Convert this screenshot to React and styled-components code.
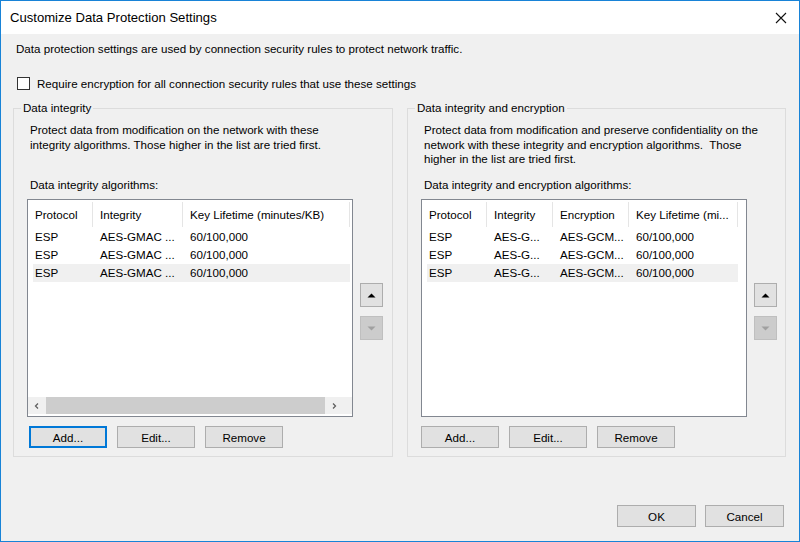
import React from 'react'
import styled, { createGlobalStyle } from 'styled-components'

const GlobalStyle = createGlobalStyle`
  html, body { margin:0; padding:0; background:#fff; }
  body {
    font-family: "Liberation Sans", Arial, sans-serif;
    font-size:11.6px;
    color:#000;
  }
`

const Window = styled.div`
  width:800px;
  height:542px;
  box-sizing:border-box;
  border:1px solid #1883d7;
  background:#f0f0f0;
  display:flex;
  flex-direction:column;
`
const TitleBar = styled.div`
  height:33px;
  flex-shrink:0;
  background:#fff;
  display:flex;
  align-items:center;
  justify-content:space-between;
  padding-left:9px;
`
const Title = styled.div`
  font-size:13.1px;
`
const CloseBtn = styled.div`
  width:36px;
  height:33px;
  display:flex;
  align-items:center;
  justify-content:center;
`
const Body = styled.div`
  flex:1;
  padding:7px 13px 0 12px;
  display:flex;
  flex-direction:column;
`
const Intro = styled.div`
  margin-left:3px;
  line-height:15px;
`
const CheckRow = styled.label`
  margin:20px 0 0 4px;
  display:flex;
  align-items:center;
  gap:7px;
  line-height:15px;
`
const CheckBox = styled.span`
  width:13px;
  height:13px;
  box-sizing:border-box;
  border:1px solid #333;
  background:#fff;
`
const Groups = styled.div`
  display:grid;
  grid-template-columns:380px 379px;
  column-gap:14px;
  margin-top:9px;
`
const GroupBox = styled.fieldset`
  margin:0;
  padding:0 0 8px 0;
  min-width:0;
  border:1px solid #dcdcdc;
`
const Legend = styled.legend`
  margin-left:7px;
  padding:0 2px;
  line-height:16px;
`
const Description = styled.div`
  margin:7px 0 0 16px;
  height:44px;
  line-height:14.5px;
  white-space:pre;
`
const ListLabel = styled.div`
  margin:10px 0 0 16px;
  line-height:15px;
`
const ListArea = styled.div`
  display:flex;
  align-items:flex-start;
  gap:7px;
  margin:7px 0 0 13px;
`
const ListView = styled.div`
  width:326px;
  height:218px;
  box-sizing:border-box;
  border:1px solid #828790;
  background:#fff;
  display:flex;
  flex-direction:column;
  overflow:hidden;
`
const HeaderRow = styled.div`
  height:28px;
  flex-shrink:0;
  display:flex;
  align-items:stretch;
  padding:2px 0 1px 5px;
  box-sizing:border-box;
`
const HeaderCell = styled.div`
  width:${p => p.$w}px;
  flex-shrink:0;
  box-sizing:border-box;
  padding-left:7px;
  border-right:1px solid #e5e5e5;
  display:flex;
  align-items:center;
  white-space:nowrap;
  overflow:hidden;
  &:first-child { padding-left:2px; }
`
const Row = styled.div`
  height:18px;
  flex-shrink:0;
  display:flex;
  margin-left:5px;
  width:${p => p.$w}px;
  background:${p => (p.$hot ? '#f0f0f0' : 'transparent')};
`
const Cell = styled.div`
  width:${p => p.$w}px;
  flex-shrink:0;
  box-sizing:border-box;
  padding-left:7px;
  line-height:18px;
  white-space:nowrap;
  overflow:hidden;
  &:first-child { padding-left:2px; }
`
const ScrollBar = styled.div`
  margin-top:auto;
  margin-bottom:2px;
  height:17px;
  flex-shrink:0;
  display:flex;
  background:#f0f0f0;
`
const ScrollArrow = styled.div`
  width:18px;
  display:flex;
  align-items:center;
  justify-content:center;
`
const Thumb = styled.div`
  width:279px;
  background:#cdcdcd;
`
const ArrowCol = styled.div`
  display:flex;
  flex-direction:column;
  gap:9px;
  margin-top:84px;
`
const MoveBtn = styled.div`
  width:23px;
  height:24px;
  box-sizing:border-box;
  border:1px solid ${p => (p.$disabled ? '#bfbfbf' : '#adadad')};
  background:${p => (p.$disabled ? '#cccccc' : '#e1e1e1')};
  display:flex;
  align-items:center;
  justify-content:center;
`
const ButtonRow = styled.div`
  display:flex;
  gap:10px;
  margin:9px 0 0 ${p => p.$indent}px;
`
const Button = styled.button`
  width:${p => p.$w || 78}px;
  height:22px;
  box-sizing:border-box;
  padding:0;
  border:1px solid ${p => (p.$focused ? '#0078d7' : '#adadad')};
  box-shadow:${p => (p.$focused ? 'inset 0 0 0 1px #0078d7' : 'none')};
  background:#e1e1e1;
  font-family:inherit;
  font-size:11.6px;
  color:#000;
`
const Footer = styled.div`
  margin-top:48px;
  padding-right:2px;
  display:flex;
  justify-content:flex-end;
  gap:9px;
`

const Chevron = ({ dir }) => (
  <svg width="8" height="8" viewBox="0 0 8 8">
    <path
      d={dir === 'left' ? 'M5 1.5 L2.5 4 L5 6.5' : 'M3 1.5 L5.5 4 L3 6.5'}
      fill="none"
      stroke="#606060"
      strokeWidth="1.3"
    />
  </svg>
)

const Triangle = ({ up, color }) => (
  <svg width="9" height="5" viewBox="0 0 9 5">
    <path d={up ? 'M0.5 4.5 L4.5 0.5 L8.5 4.5 Z' : 'M0.5 0.5 L8.5 0.5 L4.5 4.5 Z'} fill={color} />
  </svg>
)

const leftCols = [
  { label: 'Protocol', w: 60 },
  { label: 'Integrity', w: 90 },
  { label: 'Key Lifetime (minutes/KB)', w: 167 },
]
const leftRows = [
  ['ESP', 'AES-GMAC ...', '60/100,000'],
  ['ESP', 'AES-GMAC ...', '60/100,000'],
  ['ESP', 'AES-GMAC ...', '60/100,000'],
]
const rightCols = [
  { label: 'Protocol', w: 60 },
  { label: 'Integrity', w: 66 },
  { label: 'Encryption', w: 76 },
  { label: 'Key Lifetime (mi...', w: 109 },
]
const rightRows = [
  ['ESP', 'AES-G...', 'AES-GCM...', '60/100,000'],
  ['ESP', 'AES-G...', 'AES-GCM...', '60/100,000'],
  ['ESP', 'AES-G...', 'AES-GCM...', '60/100,000'],
]

const AlgorithmList = ({ cols, rows, scroll }) => {
  const width = cols.reduce((s, c) => s + c.w, 0)
  return (
    <ListView>
      <HeaderRow>
        {cols.map(c => (
          <HeaderCell key={c.label} $w={c.w}>{c.label}</HeaderCell>
        ))}
      </HeaderRow>
      {rows.map((r, i) => (
        <Row key={i} $w={width} $hot={i === rows.length - 1}>
          {r.map((v, j) => (
            <Cell key={j} $w={cols[j].w}>{v}</Cell>
          ))}
        </Row>
      ))}
      {scroll && (
        <ScrollBar>
          <ScrollArrow><Chevron dir="left" /></ScrollArrow>
          <Thumb />
          <ScrollArrow><Chevron dir="right" /></ScrollArrow>
        </ScrollBar>
      )}
    </ListView>
  )
}

const Group = ({ title, text, label, cols, rows, scroll, indent, focusAdd }) => (
  <GroupBox>
    <Legend>{title}</Legend>
    <Description>{text}</Description>
    <ListLabel>{label}</ListLabel>
    <ListArea>
      <AlgorithmList cols={cols} rows={rows} scroll={scroll} />
      <ArrowCol>
        <MoveBtn><Triangle up color="#000" /></MoveBtn>
        <MoveBtn $disabled><Triangle color="#a0a0a0" /></MoveBtn>
      </ArrowCol>
    </ListArea>
    <ButtonRow $indent={indent}>
      <Button $focused={focusAdd}>Add...</Button>
      <Button>Edit...</Button>
      <Button>Remove</Button>
    </ButtonRow>
  </GroupBox>
)

const App = () => {
  return (
    <Window>
      <GlobalStyle />
      <TitleBar>
        <Title>Customize Data Protection Settings</Title>
        <CloseBtn>
          <svg width="12" height="12" viewBox="0 0 12 12">
            <path d="M1 1 L11 11 M11 1 L1 11" stroke="#111" strokeWidth="1.1" fill="none" />
          </svg>
        </CloseBtn>
      </TitleBar>
      <Body>
        <Intro>Data protection settings are used by connection security rules to protect network traffic.</Intro>
        <CheckRow>
          <CheckBox />
          Require encryption for all connection security rules that use these settings
        </CheckRow>
        <Groups>
          <Group
            title="Data integrity"
            text={'Protect data from modification on the network with these\nintegrity algorithms. Those higher in the list are tried first.'}
            label="Data integrity algorithms:"
            cols={leftCols}
            rows={leftRows}
            scroll
            indent={15}
            focusAdd
          />
          <Group
            title="Data integrity and encryption"
            text={'Protect data from modification and preserve confidentiality on the\nnetwork with these integrity and encryption algorithms.  Those\nhigher in the list are tried first.'}
            label="Data integrity and encryption algorithms:"
            cols={rightCols}
            rows={rightRows}
            indent={13}
          />
        </Groups>
        <Footer>
          <Button $w={79}>OK</Button>
          <Button $w={79}>Cancel</Button>
        </Footer>
      </Body>
    </Window>
  )
}

export default App
